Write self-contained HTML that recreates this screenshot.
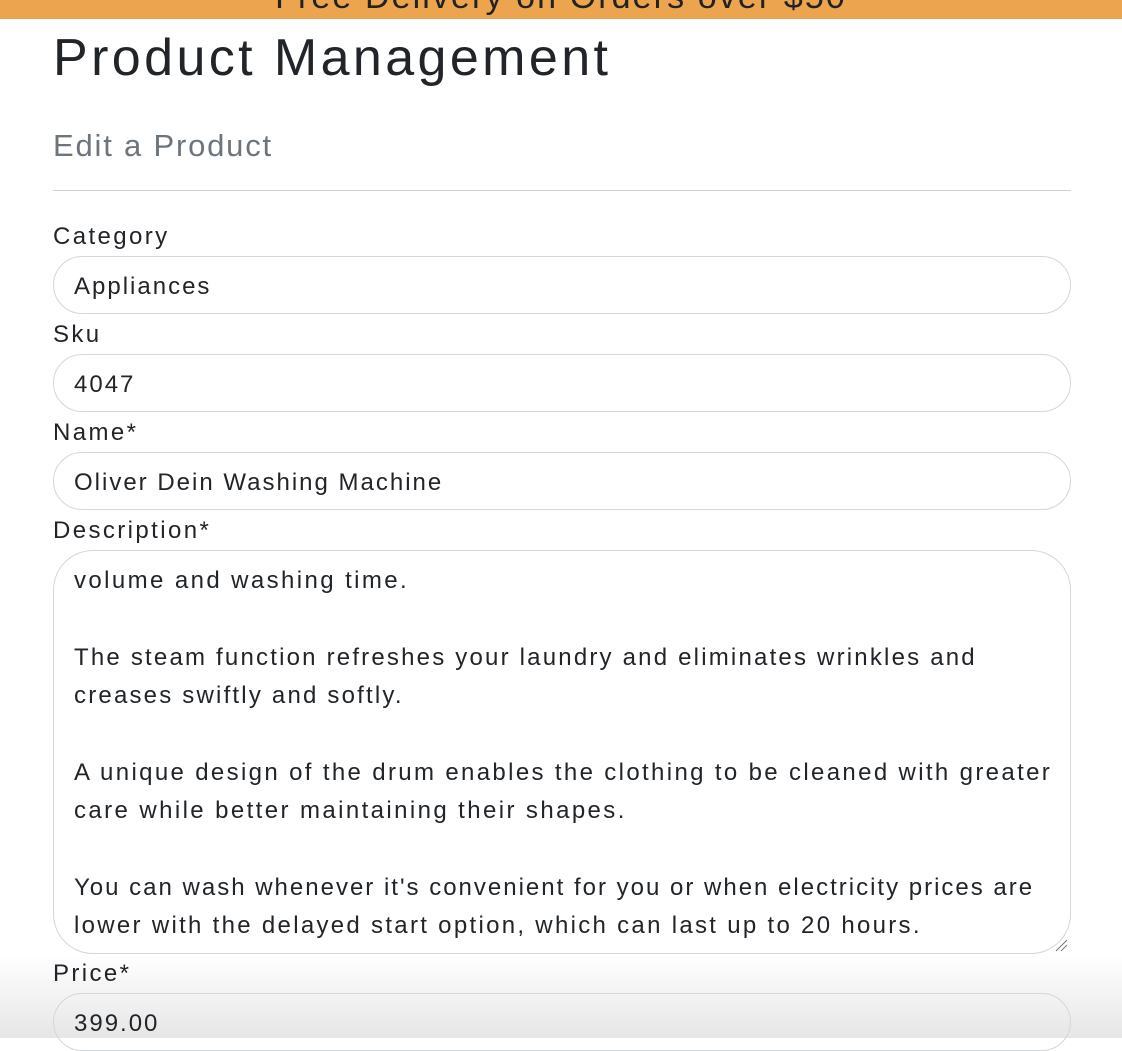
<!DOCTYPE html>
<html><head><style>
body{margin:0;width:1122px;height:1038px;overflow:hidden;background:#fff;font-family:"Liberation Sans",sans-serif;color:#212529;position:relative}
.ban{position:absolute;left:0;top:0;width:1122px;height:19px;background:#eda44f;overflow:hidden;z-index:2}
.ban span{position:absolute;left:0;width:1122px;text-align:center;top:-22px;font-size:34px;color:#222;letter-spacing:2.1px}
.a{position:absolute;white-space:pre}
.lbl{position:absolute;left:53px;font-size:24px;letter-spacing:2.4px}
.in{position:absolute;left:53px;width:1016px;height:56px;border:1px solid #d3d6da;border-radius:29px;box-sizing:content-box}
.in span{position:absolute;left:20px;top:16px;font-size:24px;letter-spacing:2px;white-space:pre}
.ta{position:absolute;left:53px;top:550px;width:1016px;height:402px;border:1px solid #d3d6da;border-radius:40px}
.ta div{position:absolute;left:20px;font-size:24px;letter-spacing:2.2px;white-space:pre}
.fade{position:absolute;left:0;top:955px;width:1122px;height:83px;background:linear-gradient(#fff,#e6e6e6);z-index:-1}
</style></head><body>
<div class="fade"></div>
<div class="ban"><span>Free Delivery on Orders over $50</span></div>
<div class="a" style="left:53px;top:28px;font-size:52px;letter-spacing:3.4px">Product Management</div>
<div class="a" style="left:53px;top:128px;font-size:31px;color:#6c757d;letter-spacing:1.8px">Edit a Product</div>
<div style="position:absolute;left:53px;top:190px;width:1018px;height:1px;background:#cfd2d5"></div>
<div class="lbl" style="top:223px">Category</div>
<div class="in" style="top:256px"><span>Appliances</span></div>
<div class="lbl" style="top:321px">Sku</div>
<div class="in" style="top:354px"><span>4047</span></div>
<div class="lbl" style="top:419px">Name*</div>
<div class="in" style="top:452px"><span>Oliver Dein Washing Machine</span></div>
<div class="lbl" style="top:517px">Description*</div>
<div class="ta">
<div style="top:16px;letter-spacing:2.4px">volume and washing time.</div>
<div style="top:93px">The steam function refreshes your laundry and eliminates wrinkles and</div>
<div style="top:131px;letter-spacing:2.2px">creases swiftly and softly.</div>
<div style="top:208px;letter-spacing:2.35px">A unique design of the drum enables the clothing to be cleaned with greater</div>
<div style="top:246px;letter-spacing:2.4px">care while better maintaining their shapes.</div>
<div style="top:323px;letter-spacing:2px">You can wash whenever it's convenient for you or when electricity prices are</div>
<div style="top:361px;letter-spacing:2.3px">lower with the delayed start option, which can last up to 20 hours.</div>
</div>
<svg style="position:absolute;left:1053px;top:937px" width="16" height="16"><path d="M3 14L14 3M8 14L14 8" stroke="#777" stroke-width="1"/></svg>
<div class="lbl" style="top:960px">Price*</div>
<div class="in" style="top:993px"><span>399.00</span></div>
</body></html>
